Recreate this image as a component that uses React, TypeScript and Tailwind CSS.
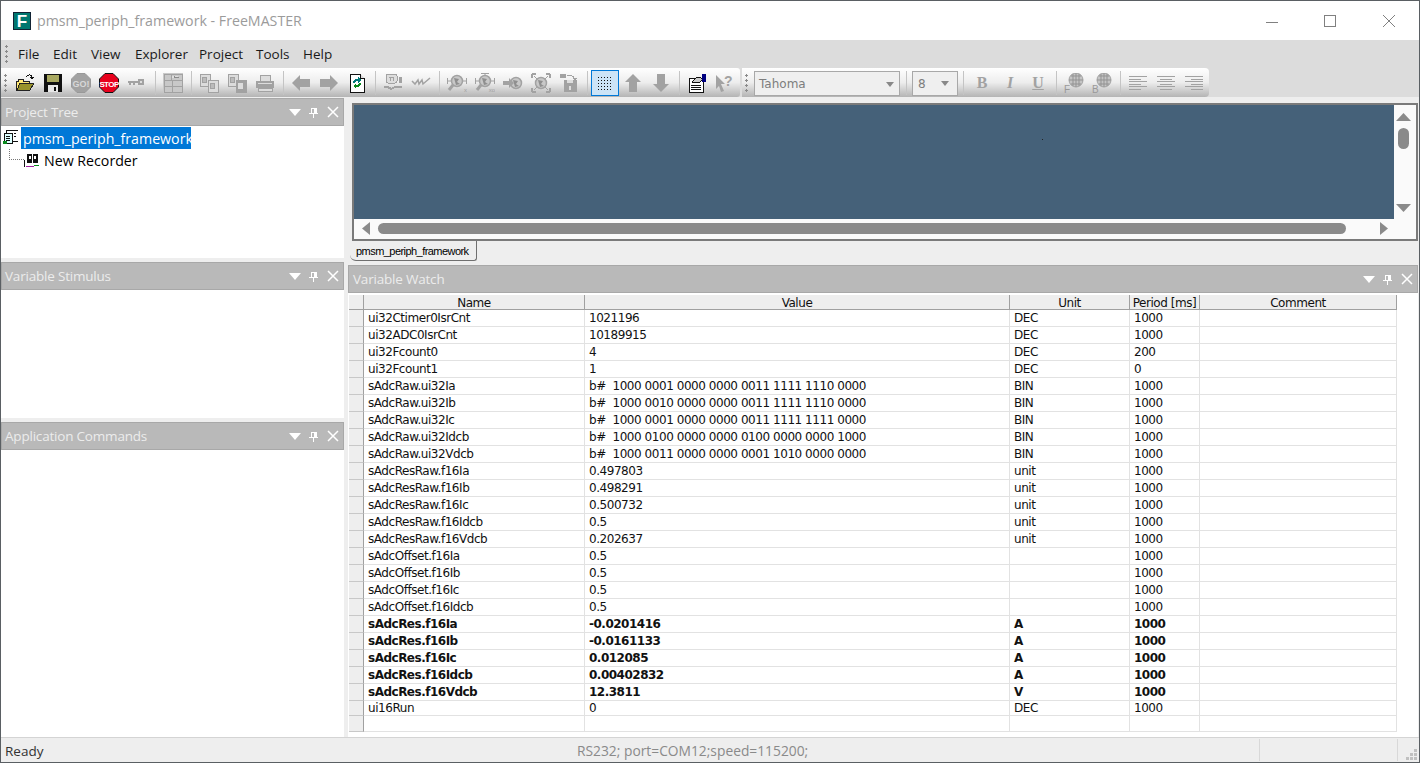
import React from 'react';

const GR = '#a2a2a2';

type Watch = { name: string; value: string; unit: string; period: string; bold?: boolean };

const rows: Watch[] = [
  { name: 'ui32Ctimer0IsrCnt', value: '1021196', unit: 'DEC', period: '1000' },
  { name: 'ui32ADC0IsrCnt', value: '10189915', unit: 'DEC', period: '1000' },
  { name: 'ui32Fcount0', value: '4', unit: 'DEC', period: '200' },
  { name: 'ui32Fcount1', value: '1', unit: 'DEC', period: '0' },
  { name: 'sAdcRaw.ui32Ia', value: 'b#  1000 0001 0000 0000 0011 1111 1110 0000', unit: 'BIN', period: '1000' },
  { name: 'sAdcRaw.ui32Ib', value: 'b#  1000 0010 0000 0000 0011 1111 1110 0000', unit: 'BIN', period: '1000' },
  { name: 'sAdcRaw.ui32Ic', value: 'b#  1000 0001 0000 0000 0011 1111 1111 0000', unit: 'BIN', period: '1000' },
  { name: 'sAdcRaw.ui32Idcb', value: 'b#  1000 0100 0000 0000 0100 0000 0000 1000', unit: 'BIN', period: '1000' },
  { name: 'sAdcRaw.ui32Vdcb', value: 'b#  1000 0011 0000 0000 0001 1010 0000 0000', unit: 'BIN', period: '1000' },
  { name: 'sAdcResRaw.f16Ia', value: '0.497803', unit: 'unit', period: '1000' },
  { name: 'sAdcResRaw.f16Ib', value: '0.498291', unit: 'unit', period: '1000' },
  { name: 'sAdcResRaw.f16Ic', value: '0.500732', unit: 'unit', period: '1000' },
  { name: 'sAdcResRaw.f16Idcb', value: '0.5', unit: 'unit', period: '1000' },
  { name: 'sAdcResRaw.f16Vdcb', value: '0.202637', unit: 'unit', period: '1000' },
  { name: 'sAdcOffset.f16Ia', value: '0.5', unit: '', period: '1000' },
  { name: 'sAdcOffset.f16Ib', value: '0.5', unit: '', period: '1000' },
  { name: 'sAdcOffset.f16Ic', value: '0.5', unit: '', period: '1000' },
  { name: 'sAdcOffset.f16Idcb', value: '0.5', unit: '', period: '1000' },
  { name: 'sAdcRes.f16Ia', value: '-0.0201416', unit: 'A', period: '1000', bold: true },
  { name: 'sAdcRes.f16Ib', value: '-0.0161133', unit: 'A', period: '1000', bold: true },
  { name: 'sAdcRes.f16Ic', value: '0.012085', unit: 'A', period: '1000', bold: true },
  { name: 'sAdcRes.f16Idcb', value: '0.00402832', unit: 'A', period: '1000', bold: true },
  { name: 'sAdcRes.f16Vdcb', value: '12.3811', unit: 'V', period: '1000', bold: true },
];

const Ico: React.FC<{ children: React.ReactNode; w?: number; h?: number }> = ({ children, w = 20, h = 20 }) => (
  <svg width={w} height={h} viewBox={`0 0 ${w} ${h}`} shapeRendering="crispEdges">{children}</svg>
);

const IOpen = () => (
  <Ico>
    <path d="M1 8h2V6h5v2h6v2H6L2 17H1z" fill="#ffe873" stroke="#222" />
    <path d="M5 10h14l-4 7H2z" fill="#99932b" stroke="#222" />
    <path d="M11 4c2-3 5-3 6 0" fill="none" stroke="#111" />
    <path d="M15 4h4l-2 3z" fill="#111" />
  </Ico>
);
const ISave = () => (
  <Ico>
    <rect x="1" y="1" width="18" height="18" fill="#111" />
    <rect x="4" y="2" width="12" height="7" fill="#a8a860" />
    <rect x="5" y="12" width="10" height="7" fill="#e8e8e8" />
    <rect x="11" y="14" width="2" height="4" fill="#111" />
  </Ico>
);
const IOct: React.FC<{ fill: string; label: string; size: number; stroke?: string; color?: string; tracking?: number }> = ({ fill, label, size, stroke = '#111', color = '#fff', tracking = 0 }) => (
  <svg width="20" height="20" viewBox="0 0 20 20">
    <path d="M6 0.500h8l5.500 5.500v8l-5.500 5.500h-8l-5.500-5.500v-8z" fill={fill} stroke={stroke} />
    <text x="10" y="13.500" textAnchor="middle" fontSize={size} fontWeight="700" letterSpacing={tracking} fill={color} fontFamily="'Liberation Sans',sans-serif">{label}</text>
  </svg>
);
const IKey = () => (
  <Ico>
    <rect x="1" y="8" width="11" height="2" fill={GR} />
    <rect x="2" y="10" width="2" height="2" fill={GR} />
    <rect x="6" y="10" width="2" height="2" fill={GR} />
    <circle cx="14" cy="9" r="3.500" fill={GR} />
    <rect x="13" y="8" width="2" height="2" fill="#ddd" />
  </Ico>
);
const ILayout = () => (
  <Ico>
    <path d="M0 0h20v20H0z" fill="#c8c8c8" />
    <path d="M1 1h18v18H1zM1 7h18M1 13h18M8 1v6M9 7v12" fill="none" stroke={GR} />
    <path d="M9 3h6v2h-6z" fill="#dedede" />
    <path d="M11 4h5M11 3v2" stroke="#8a8a8a" />
  </Ico>
);
const ICopy: React.FC<{ solid?: boolean }> = ({ solid }) => (
  <Ico>
    <rect x="1" y="1" width="10" height="12" fill="#dcdcdc" stroke={GR} />
    <rect x="3" y="4" width="4" height="5" fill="#bbb" stroke={GR} />
    <rect x="9" y="7" width="10" height="12" fill={solid ? GR : '#dcdcdc'} stroke={GR} />
    <rect x="11" y="10" width="4" height="5" fill={solid ? '#ddd' : '#bbb'} stroke={solid ? '#ddd' : GR} />
  </Ico>
);
const IPrint = () => (
  <Ico>
    <rect x="5" y="2" width="10" height="6" fill="#ddd" stroke={GR} />
    <rect x="1" y="8" width="18" height="7" fill={GR} />
    <rect x="3" y="10" width="14" height="1" fill="#ddd" />
    <rect x="3" y="15" width="14" height="3" fill="#ddd" stroke={GR} />
  </Ico>
);
const IArrow: React.FC<{ dir: 'l' | 'r' | 'u' | 'd' }> = ({ dir }) => {
  const r = { l: 0, r: 180, u: 90, d: 270 }[dir];
  return (
    <svg width="20" height="20" viewBox="0 0 20 20">
      <path d="M1 10l8-8v4h10v8H9v4z" fill={GR} transform={`rotate(${r} 10 10)`} />
    </svg>
  );
};
const IRefresh = () => (
  <Ico>
    <path d="M3 1h10l4 4v14H3z" fill="#fff" stroke="#111" />
    <path d="M13 1v4h4" fill="#ddd" stroke="#111" />
    <path d="M6 10c0-3 2-4 5-4V4l3 3-3 3V8c-2 0-3 1-3 2z" fill="#007a7a" />
    <path d="M14 10c0 3-2 4-5 4v2l-3-3 3-3v2c2 0 3-1 3-2z" fill="#0a8a1e" />
  </Ico>
);
const IScope = () => (
  <Ico>
    <rect x="3" y="1" width="11" height="9" rx="2" fill="#ddd" stroke={GR} />
    <path d="M6 4h5M7 4v4M10 4v4" stroke={GR} />
    <path d="M1 14h4l3 2 4-2h7" fill="none" stroke={GR} strokeWidth="2" />
    <rect x="16" y="4" width="3" height="6" fill={GR} />
  </Ico>
);
const IWave = () => (
  <svg width="20" height="20" viewBox="0 0 20 20">
    <path d="M1 8l3 3 3-4 1 4 3-4 1 4 7-6" fill="none" stroke={GR} strokeWidth="1.500" />
  </svg>
);
const Globe: React.FC<{ cx: number; cy: number; r: number }> = ({ cx, cy, r }) => (
  <>
    <circle cx={cx} cy={cy} r={r} fill="#c8c8c8" stroke={GR} strokeWidth="1.500" />
    <path d={`M${cx - 3} ${cy - 3}l5 1-2 3 3 2-4 1z`} fill="#8f8f8f" />
  </>
);
const IFind: React.FC<{ top?: boolean; tag: string }> = ({ top, tag }) => (
  <svg width="20" height="20" viewBox="0 0 20 20">
    <Globe cx={10} cy={8} r={5.500} />
    <path d="M6 12l-4 5" stroke={GR} strokeWidth="3" />
    <path d="M0.500 5v6M19.500 5v6M0 8h4M16 8h4" stroke={GR} />
    {top && <path d="M6 0.500h8M10 0v3" stroke={GR} />}
    <text x="20" y="19" textAnchor="end" fontSize="6" fill={GR} fontFamily="'Liberation Sans',sans-serif">{tag}</text>
  </svg>
);
const IGoto = () => (
  <svg width="20" height="20" viewBox="0 0 20 20">
    <Globe cx={13} cy={10} r={5.500} />
    <path d="M0 8h6V5l5 5-5 5v-3H0z" fill={GR} />
  </svg>
);
const IColor: React.FC<{ mark: string }> = ({ mark }) => (
  <svg width="20" height="20" viewBox="0 0 20 20">
    <circle cx="12" cy="7" r="7" fill="#c4c4c4" stroke={GR} />
    <path d="M5 7h14M12 0v14M7 3h10M7 11h10M9 1v12M15 1v12" stroke="#939393" />
    <text x="0" y="19.500" fontSize="10" fill="#999" fontFamily="'Liberation Sans',sans-serif">{mark}</text>
  </svg>
);
const IFit = () => (
  <svg width="20" height="20" viewBox="0 0 20 20">
    <Globe cx={10} cy={10} r={5.500} />
    <path d="M1 1h4M1 1v4M19 1h-4M19 1v4M1 19h4M1 19v-4M19 19h-4M19 19v-4" stroke={GR} strokeWidth="2" />
    <path d="M3 3l3 3M17 3l-3 3M3 17l3-3M17 17l-3-3" stroke={GR} />
  </svg>
);
const ILoad = () => (
  <Ico>
    <rect x="1" y="1" width="6" height="4" fill={GR} />
    <path d="M8 2c3 0 6 0 7 3" fill="none" stroke={GR} />
    <path d="M13 5h5l-2 3z" fill={GR} />
    <rect x="5" y="7" width="13" height="12" fill={GR} />
    <rect x="8" y="7" width="6" height="3" fill="#ddd" />
    <rect x="10" y="13" width="2" height="4" fill="#ddd" />
  </Ico>
);
const IProps = () => (
  <Ico>
    <rect x="2" y="5" width="14" height="14" fill="#fff" stroke="#111" />
    <path d="M4 12h10M4 14h10M4 16h10" stroke="#111" />
    <path d="M5 9l5-5h3l3 3-5 3z" fill="#ccc" stroke="#111" />
    <rect x="15" y="1" width="4" height="8" fill="#000080" />
  </Ico>
);
const IHelp = () => (
  <svg width="20" height="20" viewBox="0 0 20 20">
    <path d="M1 2l9 9H6l3 7-3 1-2-6-3 3z" fill={GR} />
    <text x="9" y="13" fontSize="14" fontWeight="700" fill={GR} fontFamily="'Liberation Sans',sans-serif">?</text>
  </svg>
);
const IFontStyle: React.FC<{ k: string }> = ({ k }) => (
  <span className={`text-[16px] leading-none font-bold text-[#a2a2a2] font-['Liberation_Serif',serif] ${k === 'I' ? 'italic' : ''} ${k === 'U' ? 'underline' : ''}`}>{k}</span>
);
const IAlign: React.FC<{ a: 'l' | 'c' | 'r' }> = ({ a }) => {
  const lines = [18, 12, 18, 12, 18, 12];
  return (
    <Ico>
      {lines.map((w, i) => (
        <rect key={i} x={a === 'l' ? 1 : a === 'c' ? 1 + (18 - w) / 2 : 19 - w} y={3 + i * 2.500} width={w} height="1" fill={GR} />
      ))}
    </Ico>
  );
};

const Btn: React.FC<{ children: React.ReactNode }> = ({ children }) => (
  <div className="w-[28px] h-[26px] flex items-center justify-center shrink-0">{children}</div>
);
const Sep = () => (
  <div className="w-[8px] h-[24px] flex justify-center shrink-0">
    <div className="w-px h-full bg-[#c4c4c4]" />
  </div>
);
const Grip = () => (
  <div className="w-[3px] h-[20px] shrink-0 bg-[radial-gradient(circle,#8a8a8a_1px,transparent_1.2px)] bg-[length:3px_5px]" />
);

const PaneHeader: React.FC<{ title: string; wide?: boolean }> = ({ title, wide }) => (
  <div className={`h-[28px] shrink-0 bg-[#b9b9b9] border border-[#a8a8a8] flex items-center pr-[4px] ${wide ? 'pl-[4px]' : 'pl-[3px]'}`}>
    <span className="flex-1 text-[13.500px] text-[#ececec] font-['Open_Sans',sans-serif] tracking-[-0.2px]">{title}</span>
    <svg width="12" height="7" viewBox="0 0 12 7" className="mr-[8px]"><path d="M0 0h12L6 7z" fill="#fff" /></svg>
    <svg width="9" height="11" viewBox="0 0 9 11" className="mr-[9px]" shapeRendering="crispEdges">
      <path d="M2 1h5v5H2zM0 6h9M4 6v5" fill="none" stroke="#fff" />
      <path d="M5 1h2v5H5z" fill="#fff" />
    </svg>
    <svg width="12" height="12" viewBox="0 0 12 12"><path d="M1 1l10 10M11 1L1 11" stroke="#fff" strokeWidth="1.500" /></svg>
  </div>
);

const cols = 'grid grid-cols-[15px_221px_425px_120px_70px_197px]';
const cell = 'border-r border-b border-[#e2e2e2] pl-[4px] overflow-hidden whitespace-pre flex items-center';

const Row: React.FC<{ r?: Watch; h: string }> = ({ r, h }) => (
  <div className={`${cols} ${h} ${r?.bold ? "font-bold text-[12px] tracking-[-0.5px]" : ''}`}>
    <div className="bg-[#eeeeee] border-r border-r-[#a0a0a0] border-b border-b-[#c8c8c8]" />
    <div className={cell}>{r?.name}</div>
    <div className={cell}>{r?.value}</div>
    <div className={cell}>{r?.unit}</div>
    <div className={cell}>{r?.period}</div>
    <div className={cell} />
  </div>
);

export default function App() {
  return (
    <div className="w-[1420px] h-[763px] flex flex-col overflow-hidden bg-[#eeeeee] border border-[#5a5f63] text-black font-['Open_Sans',sans-serif]">
      {/* title bar */}
      <div className="h-[39px] shrink-0 bg-white flex items-center">
        <div className="ml-[12px] mt-[1px] w-[18px] h-[18px] bg-[#00776f] border border-[#123] flex items-center justify-center text-white text-[17px] leading-none font-black font-['Liberation_Sans',sans-serif]">F</div>
        <span className="ml-[6px] flex-1 text-[14.200px] text-[#9b9b9b]">pmsm_periph_framework - FreeMASTER</span>
        <div className="w-[58px] flex justify-center">
          <svg width="12" height="12" viewBox="0 0 12 12" shapeRendering="crispEdges"><path d="M0 7h12" stroke="#808080" /></svg>
        </div>
        <div className="w-[58px] flex justify-center">
          <svg width="12" height="12" viewBox="0 0 12 12" shapeRendering="crispEdges"><path d="M.5.500h11v11H.5z" fill="none" stroke="#808080" /></svg>
        </div>
        <div className="w-[60px] flex justify-center">
          <svg width="12" height="12" viewBox="0 0 12 12"><path d="M0 0l12 12M12 0L0 12" stroke="#808080" /></svg>
        </div>
      </div>

      {/* menu bar */}
      <div className="h-[28px] shrink-0 bg-[#dcdcdc] flex items-center text-[13.500px] text-[#1a1a1a]">
        <div className="ml-[4px] mr-[10px]"><Grip /></div>
        <span className="w-[35px]">File</span>
        <span className="w-[38px]">Edit</span>
        <span className="w-[44px]">View</span>
        <span className="w-[64px]">Explorer</span>
        <span className="w-[57px]">Project</span>
        <span className="w-[47px]">Tools</span>
        <span>Help</span>
      </div>

      {/* toolbars */}
      <div className="h-[29px] shrink-0 bg-[#dcdcdc] flex">
        <div className="w-[739px] rounded-r-[3px] bg-gradient-to-b from-white via-[#ededed] to-[#b4b4b4] flex items-center pl-[3px]">
          <div className="w-[7px] shrink-0"><Grip /></div>
          <Btn><IOpen /></Btn>
          <Btn><ISave /></Btn>
          <Btn><IOct fill={GR} stroke="#999" label="GO!" size={9} color="#d8d8d8" /></Btn>
          <Btn><IOct fill="#e8001c" label="STOP" size={8} tracking={-0.6} /></Btn>
          <Btn><IKey /></Btn>
          <Sep />
          <Btn><ILayout /></Btn>
          <Sep />
          <Btn><ICopy /></Btn>
          <Btn><ICopy solid /></Btn>
          <Btn><IPrint /></Btn>
          <Sep />
          <Btn><IArrow dir="l" /></Btn>
          <Btn><IArrow dir="r" /></Btn>
          <Btn><IRefresh /></Btn>
          <Sep />
          <Btn><IScope /></Btn>
          <Btn><IWave /></Btn>
          <Sep />
          <Btn><IFind tag="x" /></Btn>
          <Btn><IFind top tag="xo" /></Btn>
          <Btn><IGoto /></Btn>
          <Btn><IFit /></Btn>
          <Btn><ILoad /></Btn>
          <Sep />
          <div className="w-[28px] h-[26px] shrink-0 bg-[#cce4f7] border border-[#0078d7] flex items-center justify-center">
            <div className="w-[16px] h-[14px] bg-[radial-gradient(circle,#111_0.8px,transparent_1px)] bg-[length:3px_3px]" />
          </div>
          <Btn><IArrow dir="u" /></Btn>
          <Btn><IArrow dir="d" /></Btn>
          <Sep />
          <Btn><IProps /></Btn>
          <Btn><IHelp /></Btn>
        </div>
        <div className="ml-[2px] w-[467px] rounded-r-[4px] bg-gradient-to-b from-white via-[#ededed] to-[#b4b4b4] flex items-center pl-[3px]">
          <div className="w-[9px] shrink-0"><Grip /></div>
          <div className="w-[146px] h-[25px] mt-[1px] shrink-0 bg-[#efefef] border border-[#a8a8a8] flex items-center pl-[4px] text-[#7d7d7d]">
            <span className="flex-1 pt-[1px] font-['DejaVu_Sans',sans-serif] text-[12px]">Tahoma</span>
            <svg width="8" height="5" viewBox="0 0 8 5" className="mr-[5px] mt-[3px]"><path d="M0 0h8L4 5z" fill="#888" /></svg>
          </div>
          <div className="w-[12px] h-[24px] flex justify-center shrink-0"><div className="w-px h-full bg-[#c4c4c4]" /></div>
          <div className="w-[46px] h-[25px] mt-[1px] shrink-0 bg-[#efefef] border border-[#a8a8a8] flex items-center pl-[5px] text-[#7d7d7d]">
            <span className="flex-1 pt-[1px] font-['DejaVu_Sans',sans-serif] text-[12px]">8</span>
            <svg width="8" height="5" viewBox="0 0 8 5" className="mr-[8px]"><path d="M0 0h8L4 5z" fill="#888" /></svg>
          </div>
          <div className="w-[10px] h-[24px] flex justify-center shrink-0"><div className="w-px h-full bg-[#c4c4c4]" /></div>
          <Btn><IFontStyle k="B" /></Btn>
          <Btn><IFontStyle k="I" /></Btn>
          <Btn><IFontStyle k="U" /></Btn>
          <Sep />
          <Btn><IColor mark="F" /></Btn>
          <Btn><IColor mark="B" /></Btn>
          <Sep />
          <Btn><IAlign a="l" /></Btn>
          <Btn><IAlign a="c" /></Btn>
          <Btn><IAlign a="r" /></Btn>
        </div>
      </div>

      {/* workspace */}
      <div className="flex-1 min-h-0 flex pt-[1px]">
        {/* left panes */}
        <div className="w-[343px] shrink-0 flex flex-col">
          <PaneHeader title="Project Tree" />
          <div className="h-[132px] bg-white shrink-0 text-[14.200px] text-black">
            <div className="h-[23px] flex items-center pl-[2px]">
              <svg width="15" height="15" viewBox="0 0 15 15" shapeRendering="crispEdges">
                <rect x="3" y="0" width="12" height="11" fill="#fff" stroke="#111" />
                <rect x="1" y="3" width="8" height="10" fill="#dff" stroke="#111" />
                <path d="M3 6h4M3 8h4M3 10h4M11 3h2M11 6h2" stroke="#111" />
                <rect x="0" y="11" width="4" height="3" fill="#0a8a1e" />
              </svg>
              <span className="ml-[3px] bg-[#0078d7] text-white h-[22px] w-[170px] pl-[2px] pt-[2px] flex items-center">pmsm_periph_framework</span>
            </div>
            <div className="h-[22px] flex items-center pl-[8px]">
              <div className="w-[15px] h-[11px] -mt-[11px] border-l border-b border-dotted border-[#777]" />
              <svg width="16" height="15" viewBox="0 0 16 15" shapeRendering="crispEdges">
                <rect x="0" y="7" width="1" height="7" fill="#111" />
                <rect x="3" y="1" width="5" height="9" fill="#111" />
                <rect x="9" y="1" width="5" height="9" fill="#111" />
                <rect x="5" y="3" width="2" height="3" fill="#fff" />
                <rect x="10" y="3" width="2" height="3" fill="#fff" />
                <path d="M2 13h8" stroke="#a020a0" />
                <path d="M10 12h5" stroke="#0a8a1e" />
              </svg>
              <span className="ml-[4px] pt-[2px]">New Recorder</span>
            </div>
          </div>
          <div className="h-[4px] shrink-0" />
          <PaneHeader title="Variable Stimulus" />
          <div className="h-[128px] bg-white shrink-0" />
          <div className="h-[4px] shrink-0" />
          <PaneHeader title="Application Commands" />
          <div className="flex-1 bg-white" />
        </div>

        {/* right side */}
        <div className="flex-1 min-w-0 flex flex-col pl-[4px] pr-[1px]">
          {/* document area */}
          <div className="h-[167px] shrink-0 flex flex-col pl-[4px] pt-[5px]">
            <div className="h-[138px] shrink-0 bg-[#fafafa] border-2 border-[#7a7a7a] pr-[3px] grid grid-cols-[1fr_19px] grid-rows-[114px_1fr]">
              <div className="bg-[#456179] relative">
                <div className="absolute left-[688px] top-[34px] w-px h-px bg-[#222]" />
              </div>
              <div className="row-span-2 flex flex-col items-center pt-[8px] pb-[27px]">
                <svg width="15" height="8" viewBox="0 0 15 8"><path d="M7.500 0L15 8H0z" fill="#8a8a8a" /></svg>
                <div className="w-[11px] h-[21px] mt-[7px] rounded-full bg-[#8a8a8a]" />
                <div className="flex-1" />
                <svg width="15" height="8" viewBox="0 0 15 8"><path d="M0 0h15L7.500 8z" fill="#8a8a8a" /></svg>
              </div>
              <div className="flex items-start pt-[3px] pl-[8px] pr-[6px]">
                <svg width="8" height="13" viewBox="0 0 8 13"><path d="M8 0v13L0 6.500z" fill="#8a8a8a" /></svg>
                <div className="ml-[8px] mt-[1px] w-[968px] h-[11px] rounded-full bg-[#8a8a8a]" />
                <div className="flex-1" />
                <svg width="8" height="13" viewBox="0 0 8 13"><path d="M0 0v13l8-6.500z" fill="#8a8a8a" /></svg>
              </div>
            </div>
            <div className="flex-1 flex">
              <div className="w-[127px] h-[20px] -ml-[2px] border-r border-b border-[#6f6f6f] rounded-br-[3px] rounded-bl-[6px] flex items-center pl-[6px] pt-[2px] text-[11px] text-black font-['Liberation_Sans',sans-serif] tracking-[-0.55px]">pmsm_periph_framework</div>
            </div>
          </div>

          {/* variable watch */}
          <PaneHeader title="Variable Watch" wide />
          <div className="flex-1 min-h-0 bg-white flex flex-col pl-[1px] text-[12px] text-[#111] font-['DejaVu_Sans',sans-serif] tracking-[-0.45px]">
            <div className="h-[2px] shrink-0 bg-white" />
            <div className={`${cols} h-[15px] shrink-0`}>
              <div className="bg-[#eeeeee] border-r border-b border-[#a0a0a0]" />
              {['Name', 'Value', 'Unit', 'Period [ms]', 'Comment'].map(t => (
                <div key={t} className="bg-[#eeeeee] border-r border-b border-[#a0a0a0] text-center leading-[16px] overflow-hidden whitespace-nowrap">{t}</div>
              ))}
            </div>
            {rows.map(r => <Row key={r.name} r={r} h="h-[17px]" />)}
            <Row r={{ name: 'ui16Run', value: '0', unit: 'DEC', period: '1000' }} h="h-[15px]" />
            <Row h="h-[16px]" />
          </div>
        </div>
      </div>

      {/* status bar */}
      <div className="h-[25px] shrink-0 bg-[#eeeeee] border-t border-[#d4d4d4] flex items-center">
        <span className="w-[576px] pl-[4px] pt-[2px] text-[13.500px] text-[#333]">Ready</span>
        <span className="w-[682px] pt-[2px] text-[#8a8a8a] text-[13.800px]">RS232; port=COM12;speed=115200;</span>
        <div className="w-px h-[22px] bg-[#d8d8d8]" />
        <div className="w-[137px]" />
        <div className="w-px h-[22px] bg-[#d8d8d8]" />
        <div className="flex-1 self-end flex justify-end pr-[1px] pb-[1px]">
          <svg width="12" height="12" viewBox="0 0 12 12" shapeRendering="crispEdges">
            <path d="M8 0h3v3H8zM4 4h3v3H4zM8 4h3v3H8zM0 8h3v3H0zM4 8h3v3H4zM8 8h3v3H8z" fill="#c0c0c0" />
          </svg>
        </div>
      </div>
    </div>
  );
}
